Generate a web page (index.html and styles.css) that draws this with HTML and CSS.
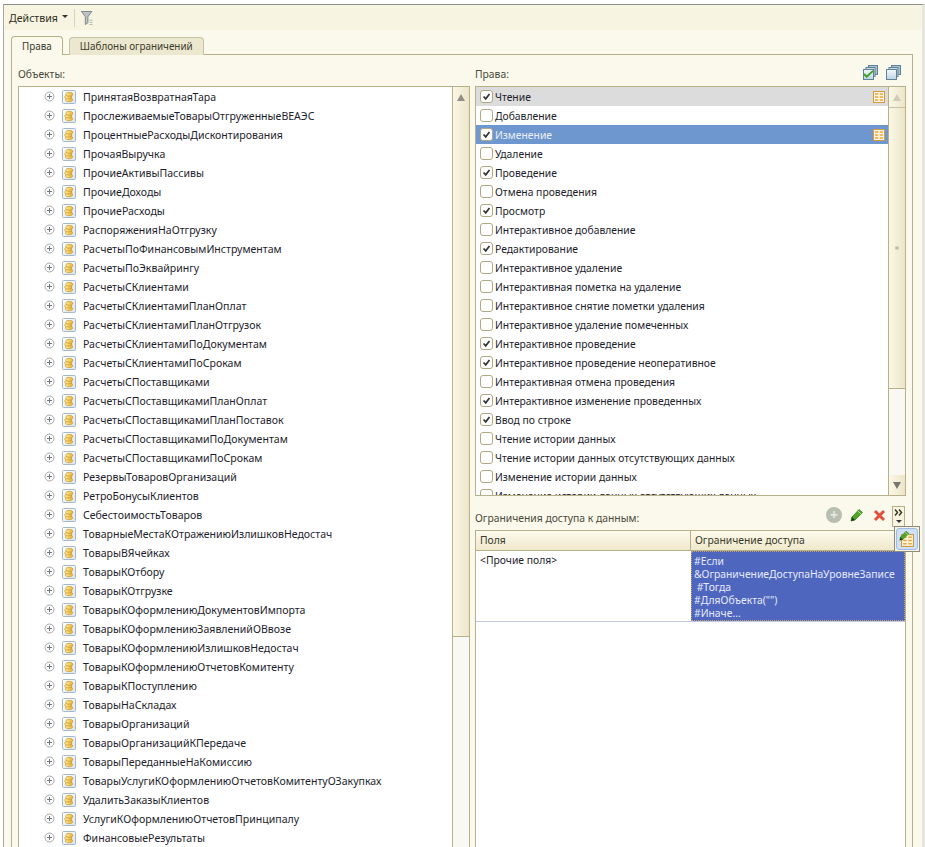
FILE: index.html
```html
<!DOCTYPE html>
<html>
  <head>
    <meta charset="utf-8">
    <title>Права</title>
    <link rel="stylesheet" href="styles.css">
  </head>
  <body>
    <svg class="defs" width="0" height="0">
      <defs>
        <linearGradient id="coin-fill" x1="0" y1="0" x2="1" y2="0">
          <stop offset="0" stop-color="#fff0a0"/>
          <stop offset="1" stop-color="#e8b030"/>
        </linearGradient>
        <linearGradient id="frame-fill" x1="0" y1="0" x2="1" y2="1">
          <stop offset="0" stop-color="#ffffff"/>
          <stop offset="1" stop-color="#d8e4ee"/>
        </linearGradient>
        <linearGradient id="sheet-fill" x1="0" y1="0" x2="0" y2="1">
          <stop offset="0" stop-color="#f4f8fb"/>
          <stop offset="1" stop-color="#bcd2e4"/>
        </linearGradient>
        <symbol id="expand" viewBox="0 0 11 11">
          <circle cx="5.5" cy="5.5" r="4.5" fill="#fbfbfb" stroke="#a8a8a8"/>
          <path d="M3 5.5h5M5.5 3v5" stroke="#777" fill="none"/>
        </symbol>
        <symbol id="coins" viewBox="0 0 14 14">
          <rect x="0.5" y="0.5" width="13" height="13" rx="1" fill="url(#frame-fill)" stroke="#a4b8c8"/>
          <path d="M3.5 9.5c0-1 1.5-1.6 3.5-1.6s3.5.6 3.5 1.6v.6c0 1-1.5 1.6-3.5 1.6s-3.5-.6-3.5-1.6z" fill="url(#coin-fill)" stroke="#c8901c" stroke-width=".7"/>
          <path d="M2.8 6.8c0-1 1.5-1.6 3.5-1.6s3.5.6 3.5 1.6v.6c0 1-1.5 1.6-3.5 1.6s-3.5-.6-3.5-1.6z" fill="url(#coin-fill)" stroke="#c8901c" stroke-width=".7"/>
          <path d="M3.8 4c0-1 1.5-1.6 3.5-1.6s3.5.6 3.5 1.6v.6c0 1-1.5 1.6-3.5 1.6s-3.5-.6-3.5-1.6z" fill="url(#coin-fill)" stroke="#c8901c" stroke-width=".7"/>
        </symbol>
        <symbol id="tick" viewBox="0 0 13 13">
          <path d="M3 6.5l2.6 2.8L10 3.6" fill="none" stroke="#333" stroke-width="2"/>
        </symbol>
        <symbol id="grid" viewBox="0 0 12 12">
          <rect x="0.5" y="0.5" width="11" height="11" fill="#fdf3d8" stroke="#d09a48"/>
          <path d="M2 3h3.2M6.8 3H10M2 6h3.2M6.8 6H10M2 9h3.2M6.8 9H10" stroke="#e6a93c" stroke-width="1.6"/>
        </symbol>
        <symbol id="stack" viewBox="0 0 15 15">
          <rect x="5.5" y="0.5" width="9" height="9" fill="#a8c2d4" stroke="#5f8296"/>
          <rect x="3" y="2.5" width="9" height="9" fill="#c8d8e4" stroke="#5f8296"/>
          <rect x="0.5" y="4.5" width="10" height="10" fill="url(#sheet-fill)" stroke="#5f8296"/>
        </symbol>
        <symbol id="pencil" viewBox="0 0 14 14">
          <path d="M1 13l1-4 7-7.5 3.5 3L5 12z" fill="#4fa52c" stroke="#2f7a18" stroke-width=".7"/>
          <path d="M1 13l1-4 3 3z" fill="#1c3a10"/>
          <path d="M8 3.2l3.4 3" stroke="#b6e58c" fill="none"/>
        </symbol>
      </defs>
    </svg>

    <div class="window">
      <div class="toolbar">
        <span class="menu">Действия</span>
        <span class="menu-arrow"></span>
        <span class="sep"></span>
        <svg class="filter" viewBox="0 0 15 17" width="13" height="16">
          <path d="M.5 1h12L8 7v7L5 16V7z" fill="#bcc2c6" stroke="#767e84"/>
          <path d="M10 11h4M10 13.5h4M10 16h4" stroke="#6f8f5a" stroke-dasharray="1 1" fill="none"/>
        </svg>
      </div>

      <div class="tabs">
        <div class="tab active">Права</div>
        <div class="tab">Шаблоны ограничений</div>
      </div>

      <div class="panel">
        <div class="col-left">
          <div class="label-row">Объекты:</div>
          <div class="listbox tree">
            <div class="rows">
              <div class="node"><svg class="exp"><use href="#expand"/></svg><svg class="coin"><use href="#coins"/></svg>ПринятаяВозвратнаяТара</div>
              <div class="node"><svg class="exp"><use href="#expand"/></svg><svg class="coin"><use href="#coins"/></svg>ПрослеживаемыеТоварыОтгруженныеВЕАЭС</div>
              <div class="node"><svg class="exp"><use href="#expand"/></svg><svg class="coin"><use href="#coins"/></svg>ПроцентныеРасходыДисконтирования</div>
              <div class="node"><svg class="exp"><use href="#expand"/></svg><svg class="coin"><use href="#coins"/></svg>ПрочаяВыручка</div>
              <div class="node"><svg class="exp"><use href="#expand"/></svg><svg class="coin"><use href="#coins"/></svg>ПрочиеАктивыПассивы</div>
              <div class="node"><svg class="exp"><use href="#expand"/></svg><svg class="coin"><use href="#coins"/></svg>ПрочиеДоходы</div>
              <div class="node"><svg class="exp"><use href="#expand"/></svg><svg class="coin"><use href="#coins"/></svg>ПрочиеРасходы</div>
              <div class="node"><svg class="exp"><use href="#expand"/></svg><svg class="coin"><use href="#coins"/></svg>РаспоряженияНаОтгрузку</div>
              <div class="node"><svg class="exp"><use href="#expand"/></svg><svg class="coin"><use href="#coins"/></svg>РасчетыПоФинансовымИнструментам</div>
              <div class="node"><svg class="exp"><use href="#expand"/></svg><svg class="coin"><use href="#coins"/></svg>РасчетыПоЭквайрингу</div>
              <div class="node"><svg class="exp"><use href="#expand"/></svg><svg class="coin"><use href="#coins"/></svg>РасчетыСКлиентами</div>
              <div class="node"><svg class="exp"><use href="#expand"/></svg><svg class="coin"><use href="#coins"/></svg>РасчетыСКлиентамиПланОплат</div>
              <div class="node"><svg class="exp"><use href="#expand"/></svg><svg class="coin"><use href="#coins"/></svg>РасчетыСКлиентамиПланОтгрузок</div>
              <div class="node"><svg class="exp"><use href="#expand"/></svg><svg class="coin"><use href="#coins"/></svg>РасчетыСКлиентамиПоДокументам</div>
              <div class="node"><svg class="exp"><use href="#expand"/></svg><svg class="coin"><use href="#coins"/></svg>РасчетыСКлиентамиПоСрокам</div>
              <div class="node"><svg class="exp"><use href="#expand"/></svg><svg class="coin"><use href="#coins"/></svg>РасчетыСПоставщиками</div>
              <div class="node"><svg class="exp"><use href="#expand"/></svg><svg class="coin"><use href="#coins"/></svg>РасчетыСПоставщикамиПланОплат</div>
              <div class="node"><svg class="exp"><use href="#expand"/></svg><svg class="coin"><use href="#coins"/></svg>РасчетыСПоставщикамиПланПоставок</div>
              <div class="node"><svg class="exp"><use href="#expand"/></svg><svg class="coin"><use href="#coins"/></svg>РасчетыСПоставщикамиПоДокументам</div>
              <div class="node"><svg class="exp"><use href="#expand"/></svg><svg class="coin"><use href="#coins"/></svg>РасчетыСПоставщикамиПоСрокам</div>
              <div class="node"><svg class="exp"><use href="#expand"/></svg><svg class="coin"><use href="#coins"/></svg>РезервыТоваровОрганизаций</div>
              <div class="node"><svg class="exp"><use href="#expand"/></svg><svg class="coin"><use href="#coins"/></svg>РетроБонусыКлиентов</div>
              <div class="node"><svg class="exp"><use href="#expand"/></svg><svg class="coin"><use href="#coins"/></svg>СебестоимостьТоваров</div>
              <div class="node"><svg class="exp"><use href="#expand"/></svg><svg class="coin"><use href="#coins"/></svg>ТоварныеМестаКОтражениюИзлишковНедостач</div>
              <div class="node"><svg class="exp"><use href="#expand"/></svg><svg class="coin"><use href="#coins"/></svg>ТоварыВЯчейках</div>
              <div class="node"><svg class="exp"><use href="#expand"/></svg><svg class="coin"><use href="#coins"/></svg>ТоварыКОтбору</div>
              <div class="node"><svg class="exp"><use href="#expand"/></svg><svg class="coin"><use href="#coins"/></svg>ТоварыКОтгрузке</div>
              <div class="node"><svg class="exp"><use href="#expand"/></svg><svg class="coin"><use href="#coins"/></svg>ТоварыКОформлениюДокументовИмпорта</div>
              <div class="node"><svg class="exp"><use href="#expand"/></svg><svg class="coin"><use href="#coins"/></svg>ТоварыКОформлениюЗаявленийОВвозе</div>
              <div class="node"><svg class="exp"><use href="#expand"/></svg><svg class="coin"><use href="#coins"/></svg>ТоварыКОформлениюИзлишковНедостач</div>
              <div class="node"><svg class="exp"><use href="#expand"/></svg><svg class="coin"><use href="#coins"/></svg>ТоварыКОформлениюОтчетовКомитенту</div>
              <div class="node"><svg class="exp"><use href="#expand"/></svg><svg class="coin"><use href="#coins"/></svg>ТоварыКПоступлению</div>
              <div class="node"><svg class="exp"><use href="#expand"/></svg><svg class="coin"><use href="#coins"/></svg>ТоварыНаСкладах</div>
              <div class="node"><svg class="exp"><use href="#expand"/></svg><svg class="coin"><use href="#coins"/></svg>ТоварыОрганизаций</div>
              <div class="node"><svg class="exp"><use href="#expand"/></svg><svg class="coin"><use href="#coins"/></svg>ТоварыОрганизацийКПередаче</div>
              <div class="node"><svg class="exp"><use href="#expand"/></svg><svg class="coin"><use href="#coins"/></svg>ТоварыПереданныеНаКомиссию</div>
              <div class="node"><svg class="exp"><use href="#expand"/></svg><svg class="coin"><use href="#coins"/></svg>ТоварыУслугиКОформлениюОтчетовКомитентуОЗакупках</div>
              <div class="node"><svg class="exp"><use href="#expand"/></svg><svg class="coin"><use href="#coins"/></svg>УдалитьЗаказыКлиентов</div>
              <div class="node"><svg class="exp"><use href="#expand"/></svg><svg class="coin"><use href="#coins"/></svg>УслугиКОформлениюОтчетовПринципалу</div>
              <div class="node"><svg class="exp"><use href="#expand"/></svg><svg class="coin"><use href="#coins"/></svg>ФинансовыеРезультаты</div>
            </div>
            <div class="scrollbar">
              <div class="sb-btn"><span class="arrow-up"></span></div>
              <div class="sb-thumb long"></div>
              <div class="sb-track"></div>
              <div class="sb-btn last"></div>
            </div>
          </div>
        </div>

        <div class="col-right">
          <div class="label-row">
            <span class="grow">Права:</span>
            <svg class="stack"><use href="#stack"/></svg>
            <svg class="tick-green" viewBox="0 0 12 9" width="11" height="8"><path d="M1 4.5l3 3L11 1" fill="none" stroke="#3fa11f" stroke-width="2.2"/></svg>
            <svg class="stack second"><use href="#stack"/></svg>
          </div>
          <div class="listbox rights">
            <div class="rows">
              <div class="right-row current"><span class="cb"><svg><use href="#tick"/></svg></span><span class="grow">Чтение</span><svg class="grid"><use href="#grid"/></svg></div>
              <div class="right-row"><span class="cb"></span>Добавление</div>
              <div class="right-row selected"><span class="cb"><svg><use href="#tick"/></svg></span><span class="grow">Изменение</span><svg class="grid"><use href="#grid"/></svg></div>
              <div class="right-row"><span class="cb"></span>Удаление</div>
              <div class="right-row"><span class="cb"><svg><use href="#tick"/></svg></span>Проведение</div>
              <div class="right-row"><span class="cb"></span>Отмена проведения</div>
              <div class="right-row"><span class="cb"><svg><use href="#tick"/></svg></span>Просмотр</div>
              <div class="right-row"><span class="cb"></span>Интерактивное добавление</div>
              <div class="right-row"><span class="cb"><svg><use href="#tick"/></svg></span>Редактирование</div>
              <div class="right-row"><span class="cb"></span>Интерактивное удаление</div>
              <div class="right-row"><span class="cb"></span>Интерактивная пометка на удаление</div>
              <div class="right-row"><span class="cb"></span>Интерактивное снятие пометки удаления</div>
              <div class="right-row"><span class="cb"></span>Интерактивное удаление помеченных</div>
              <div class="right-row"><span class="cb"><svg><use href="#tick"/></svg></span>Интерактивное проведение</div>
              <div class="right-row"><span class="cb"><svg><use href="#tick"/></svg></span>Интерактивное проведение неоперативное</div>
              <div class="right-row"><span class="cb"></span>Интерактивная отмена проведения</div>
              <div class="right-row"><span class="cb"><svg><use href="#tick"/></svg></span>Интерактивное изменение проведенных</div>
              <div class="right-row"><span class="cb"><svg><use href="#tick"/></svg></span>Ввод по строке</div>
              <div class="right-row"><span class="cb"></span>Чтение истории данных</div>
              <div class="right-row"><span class="cb"></span>Чтение истории данных отсутствующих данных</div>
              <div class="right-row"><span class="cb"></span>Изменение истории данных</div>
              <div class="right-row"><span class="cb"></span>Изменение истории данных отсутствующих данных</div>
            </div>
            <div class="scrollbar">
              <div class="sb-btn"><span class="arrow-up pale"></span></div>
              <div class="sb-thumb"><span class="grip"></span></div>
              <div class="sb-track"></div>
              <div class="sb-btn"><span class="arrow-down"></span></div>
            </div>
          </div>

          <div class="limits-head">
            <span class="grow">Ограничения доступа к данным:</span>
            <span class="add-btn">+</span>
            <svg class="pencil"><use href="#pencil"/></svg>
            <svg class="cross" viewBox="0 0 13 13" width="13" height="13"><path d="M2 2l9 9M11 2l-9 9" stroke="#e2503c" stroke-width="3" fill="none"/></svg>
            <div class="more">
              <svg class="chevrons" viewBox="0 0 10 7" width="10" height="7"><path d="M1 .5l2.5 3L1 6.5M5 .5l2.5 3L5 6.5" fill="none" stroke="#3a3a20" stroke-width="1.5"/></svg>
              <span class="more-arrow"></span>
            </div>
          </div>

          <div class="limits-table">
            <div class="thead">
              <div class="th th-fields">Поля</div>
              <div class="th">Ограничение доступа</div>
            </div>
            <div class="tr">
              <div class="td td-fields">&lt;Прочие поля&gt;</div>
              <div class="td td-code">#Если<br>&amp;ОграничениеДоступаНаУровнеЗаписе<br>&nbsp;#Тогда<br>#ДляОбъекта("")<br>#Иначе...</div>
            </div>
          </div>

          <div class="popup">
            <div class="popup-btn">
              <svg class="grid big"><use href="#grid"/></svg>
              <svg class="pencil small"><use href="#pencil"/></svg>
            </div>
          </div>
        </div>
      </div>
    </div>
  </body>
</html>
```

FILE: styles.css
```css
html, body {
  margin: 0;
  padding: 0;
  height: 847px;
  overflow: hidden;
  background-color: #ffffff;
}
body {
  font-family: "Noto Sans", "Liberation Sans", sans-serif;
  font-size: 10.35px;
  color: #1d1d2c;
}
.defs {
  position: absolute;
}
.grow {
  flex: 1;
}

.window {
  box-sizing: border-box;
  width: 922px;
  height: 847px;
  margin: 4px 0 0 3px;
  background-color: #fbf9ec;
  border-top: 1px solid #8f8f86;
  border-left: 1px solid #a8a89c;
  border-right: 3px solid #e6e6e0;
}

.toolbar {
  display: flex;
  align-items: center;
  height: 25px;
  padding-left: 5px;
  background-color: #f7f4e2;
  font-size: 10.6px;
}
.menu {
  color: #2f2f20;
}
.menu-arrow {
  width: 0;
  height: 0;
  margin: 0 0 2px 4px;
  border-left: 3px solid transparent;
  border-right: 3px solid transparent;
  border-top: 3px solid #333333;
}
.sep {
  width: 1px;
  height: 18px;
  margin: 0 6px 0 6px;
  background-color: #d8d4bc;
}
.filter {
  display: block;
}

.tabs {
  display: flex;
  gap: 6px;
  height: 19px;
  margin: 6px 0 0 7px;
  position: relative;
  z-index: 1;
  font-size: 9.9px;
}
.tab {
  box-sizing: border-box;
  height: 18px;
  margin-top: 1px;
  padding: 0 10px;
  line-height: 16px;
  background-color: #ece7cf;
  border: 1px solid #c8c19f;
  border-bottom: none;
  border-radius: 4px 4px 0 0;
  color: #3a3a2c;
}
.tab.active {
  height: 19px;
  margin-top: 0;
  line-height: 18px;
  background-color: #fbf9ec;
  border-color: #b8b08a;
}

.panel {
  display: flex;
  gap: 5px;
  box-sizing: border-box;
  width: 902px;
  height: 810px;
  margin: -1px 0 0 7px;
  padding: 0 6px;
  background-color: #fbf9ec;
  border: 1px solid #b8b08a;
}
.col-left {
  width: 452px;
}
.col-right {
  position: relative;
  width: 431px;
}
.label-row {
  display: flex;
  align-items: center;
  height: 31px;
  padding-top: 7px;
  box-sizing: border-box;
  color: #4a4a3a;
}

.listbox {
  display: flex;
  box-sizing: border-box;
  background-color: #ffffff;
  border: 1px solid #b8b08a;
  overflow: hidden;
}
.tree {
  height: 800px;
  font-size: 10.55px;
}
.rights {
  height: 410px;
}
.rows {
  flex: 1;
  min-width: 0;
  overflow: hidden;
}

.node {
  display: flex;
  align-items: center;
  height: 19px;
  padding-left: 25px;
  white-space: nowrap;
}
.exp {
  width: 11px;
  height: 11px;
  margin-right: 7px;
}
.coin {
  width: 14px;
  height: 14px;
  margin-right: 7px;
}

.right-row {
  display: flex;
  align-items: center;
  height: 19px;
  padding: 0 3px 0 4px;
  white-space: nowrap;
}
.right-row.current {
  background-color: #dcdcdc;
}
.right-row.selected {
  background-color: #6f97cf;
  color: #e8eef8;
}
.cb {
  box-sizing: border-box;
  flex: none;
  width: 13px;
  height: 13px;
  margin-right: 2px;
  background-color: #ffffff;
  border: 1px solid #b0a884;
  border-radius: 3px;
}
.cb svg {
  display: block;
  width: 11px;
  height: 11px;
}
.grid {
  width: 12px;
  height: 12px;
}

.scrollbar {
  display: flex;
  flex-direction: column;
  flex: none;
  box-sizing: border-box;
  width: 17px;
  border-left: 1px solid #b8b08a;
  background-color: #f9f8f3;
}
.sb-btn {
  display: flex;
  align-items: center;
  justify-content: center;
  flex: none;
  height: 20px;
  background: linear-gradient(to right, #faf7e6, #ece6c8);
}
.sb-btn.last {
  border-top: 1px solid #b8b08a;
}
.sb-thumb {
  display: flex;
  align-items: center;
  justify-content: center;
  flex: none;
  height: 282px;
  background: linear-gradient(to right, #faf7e6, #ece6c8);
  border-top: 1px solid #c8c19f;
  border-bottom: 1px solid #b8b08a;
  box-sizing: border-box;
}
.sb-thumb.long {
  height: 530px;
  border-top: none;
}
.sb-track {
  flex: 1;
}
.arrow-up {
  width: 0;
  height: 0;
  border-left: 4px solid transparent;
  border-right: 4px solid transparent;
  border-bottom: 7px solid #8f8f88;
}
.arrow-up.pale {
  border-bottom-color: #d0ccba;
}
.arrow-down {
  width: 0;
  height: 0;
  border-left: 4px solid transparent;
  border-right: 4px solid transparent;
  border-top: 7px solid #77776f;
}
.grip {
  width: 4px;
  height: 4px;
  border-radius: 50%;
  background-color: #c4c2b2;
}

.stack {
  width: 15px;
  height: 15px;
  margin-bottom: 3px;
}
.stack.second {
  margin-left: 12px;
  margin-right: 5px;
}
.tick-green {
  position: relative;
  margin-left: -15px;
}

.limits-head {
  display: flex;
  align-items: flex-end;
  box-sizing: border-box;
  height: 34px;
  color: #4a4a3a;
  padding-bottom: 5px;
}
.add-btn {
  display: flex;
  align-items: center;
  justify-content: center;
  width: 16px;
  height: 16px;
  margin: 0 8px 2px 0;
  border-radius: 50%;
  background-color: #b8bfb0;
  color: #e8ebe2;
  font-size: 14px;
  font-weight: bold;
  line-height: 16px;
}
.pencil {
  width: 14px;
  height: 14px;
  margin: 0 9px 3px 0;
}
.cross {
  margin: 0 6px 3px 0;
}
.more {
  box-sizing: border-box;
  display: flex;
  flex-direction: column;
  align-items: center;
  width: 13px;
  height: 21px;
  margin: 0 1px -2px 0;
  padding-top: 2px;
  border: 1px solid #b8b08a;
  background-color: #f7f4e2;
}
.chevrons {
  display: block;
}
.more-arrow {
  width: 0;
  height: 0;
  margin-top: 4px;
  border-left: 3px solid transparent;
  border-right: 3px solid transparent;
  border-top: 3px solid #333333;
}

.limits-table {
  box-sizing: border-box;
  height: 320px;
  background-color: #ffffff;
  border: 1px solid #b8b08a;
}
.thead {
  display: flex;
  box-sizing: border-box;
  height: 20px;
  background: linear-gradient(to bottom, #fcfaec, #efe8cb);
  border-bottom: 1px solid #b8b08a;
}
.th {
  flex: 1;
  padding-left: 4px;
  line-height: 18px;
  color: #3a3a2a;
}
.th-fields, .td-fields {
  flex: none;
  box-sizing: border-box;
  width: 215px;
}
.th-fields {
  border-right: 1px solid #b8b08a;
}
.tr {
  display: flex;
  height: 71px;
  box-sizing: border-box;
  border-bottom: 1px solid #c0c8e4;
}
.td-fields {
  padding: 3px 4px;
  line-height: 13px;
}
.td-code {
  flex: 1;
  box-sizing: border-box;
  padding: 3px 2px;
  line-height: 13px;
  background-color: #4f66bf;
  color: #e6eaf8;
  border: 1px dotted #c8a060;
  white-space: nowrap;
  overflow: hidden;
}

.popup {
  position: absolute;
  top: 471px;
  left: 419px;
  box-sizing: border-box;
  width: 26px;
  height: 26px;
  padding: 1px;
  background-color: #f7f4e2;
  border: 1px solid #8a8a80;
  z-index: 2;
}
.popup-btn {
  position: relative;
  box-sizing: border-box;
  height: 22px;
  background-color: #cfe0f6;
  border: 1px solid #9ebbe4;
  border-radius: 3px;
}
.grid.big {
  position: absolute;
  left: 4px;
  top: 5px;
  width: 13px;
  height: 13px;
}
.pencil.small {
  position: absolute;
  left: 2px;
  top: 1px;
  width: 11px;
  height: 11px;
  margin: 0;
}
```
